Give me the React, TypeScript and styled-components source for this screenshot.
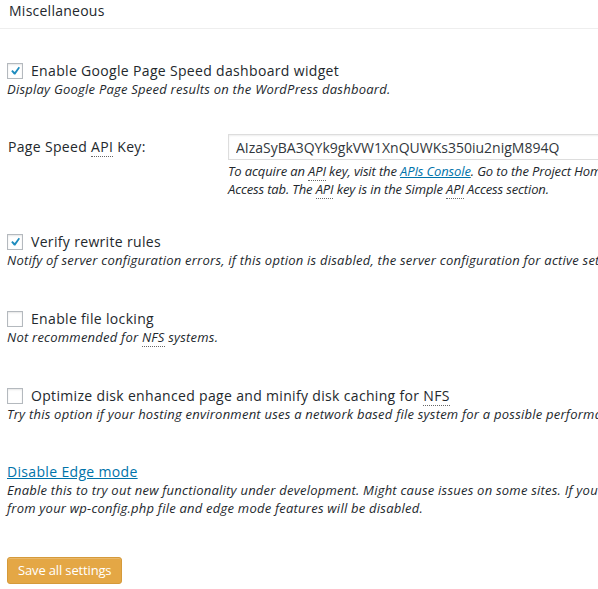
import React from "react";
import styled, { createGlobalStyle } from "styled-components";

const Global = createGlobalStyle`
  html, body { margin: 0; padding: 0; background: #fff; overflow: hidden; }
  body { font-family: "Open Sans", "Noto Sans", sans-serif; color: #23282d; font-size: 14px; }
`;

const Page = styled.div`
  width: 598px;
  height: 589px;
  overflow: hidden;
`;

const Header = styled.h3`
  margin: 0;
  padding: 1px 9px 0;
  height: 27px;
  font-size: 14px;
  font-weight: 400;
  line-height: 19px;
  letter-spacing: 0.25px;
  border-bottom: 1px solid #eeeeee;
`;

const Body = styled.div`
  padding: 0 7px;
  display: flex;
  flex-direction: column;
`;

const Section = styled.div<{ $top: number }>`
  margin-top: ${(p) => p.$top}px;
  display: flex;
  flex-direction: column;
`;

const CheckRow = styled.label`
  display: flex;
  align-items: center;
  gap: 8px;
  height: 19px;
  font-size: 14px;
  letter-spacing: 0.33px;
  white-space: nowrap;
`;

const Box = styled.span`
  width: 16px;
  height: 16px;
  box-sizing: border-box;
  border: 1px solid #b4b9be;
  background: #fff;
  box-shadow: inset 0 1px 2px rgba(0, 0, 0, 0.1);
  display: flex;
  align-items: center;
  justify-content: center;
  flex: none;
`;

const Desc = styled.div<{ $tight?: boolean }>`
  font-size: 13px;
  font-style: italic;
  line-height: 18px;
  letter-spacing: ${(p) => (p.$tight ? "-0.13px" : "0.23px")};
  white-space: nowrap;
  color: #23282d;
`;

const Abbr = styled.abbr`
  text-decoration: none;
  border-bottom: 1px dotted #666;
`;

const Link = styled.a`
  color: #0073aa;
  text-decoration: underline;
`;

const FieldGrid = styled.div`
  display: grid;
  grid-template-columns: 221px 1fr;
  align-items: start;
`;

const FieldLabel = styled.div`
  font-size: 14px;
  line-height: 26px;
  letter-spacing: 0.33px;
  padding-left: 1px;
  white-space: nowrap;
`;

const FieldCol = styled.div`
  display: flex;
  flex-direction: column;
  gap: 2px;
`;

const TextInput = styled.input`
  width: 550px;
  height: 26px;
  box-sizing: border-box;
  border: 1px solid #dddddd;
  box-shadow: inset 0 1px 2px rgba(0, 0, 0, 0.07);
  padding: 0 7px;
  font-family: "Open Sans", "Noto Sans", sans-serif;
  font-size: 14px;
  color: #32373c;
  outline: none;
`;

const LinkTitle = styled.div`
  font-size: 14px;
  line-height: 19px;
  letter-spacing: 0.33px;
`;

const Button = styled.button`
  margin-top: 40px;
  align-self: flex-start;
  height: 27px;
  padding: 0 10px;
  background: #e4a745;
  border: 1px solid #d59a3a;
  border-radius: 3px;
  color: #fff;
  font-family: "Open Sans", "Noto Sans", sans-serif;
  font-size: 13px;
  letter-spacing: -0.15px;
  line-height: 25px;
  box-shadow: inset 0 1px 0 rgba(255, 255, 255, 0.2);
`;

const Check = () => (
  <svg width="16" height="16" viewBox="0 0 20 20">
    <path d="M15.2 3.9l1.9 1.4-6.6 9.6H8.6L4.6 10.2l1.8-1.7 3.2 3z" fill="#1e8cbe" />
  </svg>
);

const Option = ({ on, label, children, top }: { on?: boolean; label: React.ReactNode; children: React.ReactNode; top: number }) => (
  <Section $top={top}>
    <CheckRow>
      <Box>{on && <Check />}</Box>
      <span>{label}</span>
    </CheckRow>
    <Desc>{children}</Desc>
  </Section>
);

export default function App() {
  return (
    <Page>
      <Global />
      <Header>Miscellaneous</Header>
      <Body>
        <Option on top={32} label="Enable Google Page Speed dashboard widget">
          Display Google Page Speed results on the WordPress dashboard.
        </Option>
        <Section $top={36}>
          <FieldGrid>
            <FieldLabel>
              Page Speed <Abbr>API</Abbr> Key:
            </FieldLabel>
            <FieldCol>
              <TextInput defaultValue="AIzaSyBA3QYk9gkVW1XnQUWKs350iu2nigM894Q" />
              <Desc $tight>
                To acquire an <Abbr>API</Abbr> key, visit the <Link href="#">APIs Console</Link>. Go to the Project Home tab, activate the PageSpeed Insights <Abbr>API</Abbr>, and accept the Terms of Service. Then go to the <Abbr>API</Abbr>
                <br />
                Access tab. The <Abbr>API</Abbr> key is in the Simple <Abbr>API</Abbr> Access section.
              </Desc>
            </FieldCol>
          </FieldGrid>
        </Section>
        <Option on top={34} label="Verify rewrite rules">
          Notify of server configuration errors, if this option is disabled, the server configuration for active settings will be assumed to be correct.
        </Option>
        <Option top={40} label="Enable file locking">
          Not recommended for <Abbr>NFS</Abbr> systems.
        </Option>
        <Option top={40} label={<>Optimize disk enhanced page and minify disk caching for <Abbr>NFS</Abbr></>}>
          Try this option if your hosting environment uses a network based file system for a possible performance improvement.
        </Option>
        <Section $top={39}>
          <LinkTitle>
            <Link href="#">Disable Edge mode</Link>
          </LinkTitle>
          <Desc>
            Enable this to try out new functionality under development. Might cause issues on some sites. If you have issues with edge mode, remove the W3TC_EDGE_MODE constant
            <br />
            from your wp-config.php file and edge mode features will be disabled.
          </Desc>
        </Section>
        <Button>Save all settings</Button>
      </Body>
    </Page>
  );
}
